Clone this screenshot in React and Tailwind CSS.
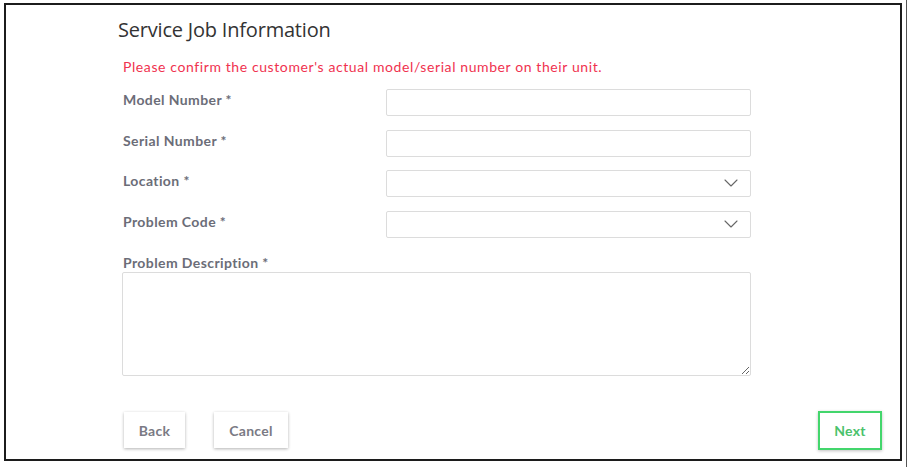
import { ChevronDown } from 'lucide-react';

const Field = ({ label, select = false }) => (
  <div className="flex items-center h-[27px]">
    <label className="w-[263px] mb-[6px] text-[14px] tracking-[0.4px] font-bold text-[#6b6d78]">{label}</label>
    <div className="relative w-[365px] h-[27px] border border-[#dcdcdc] rounded-[2px] bg-white">
      {select && (
        <ChevronDown size={24} strokeWidth={1.1} className="absolute right-[7px] top-0 text-[#666]" />
      )}
    </div>
  </div>
);

const Button = ({ children, className = '' }) => (
  <button className={`h-[36px] bg-white text-[14px] tracking-[0.3px] font-bold text-[#7a7a84] shadow-[0_1px_3px_rgba(0,0,0,0.3)] ${className}`}>
    {children}
  </button>
);

export default function App() {
  return (
    <div className="flex w-[909px] h-[467px] bg-white font-['Lato',sans-serif]">
      <div className="ml-[4px] mt-[3px] w-[898px] h-[458px] border-2 border-[#1c1c1c] flex flex-col pl-[112px] pr-[18px]">
        <h1 className="mt-[12px] text-[20px] leading-[26px] text-[#333] font-['Open_Sans',sans-serif] tracking-[-0.2px]">
          Service Job Information
        </h1>
        <p className="mt-[16px] ml-[5px] text-[14px] leading-[16px] text-[#f0324f] tracking-[0.6px]">
          Please confirm the customer's actual model/serial number on their unit.
        </p>
        <div className="mt-[14px] ml-[5px] flex flex-col gap-[13.5px]">
          <Field label="Model Number *" />
          <Field label="Serial Number *" />
          <Field label="Location *" select />
          <Field label="Problem Code *" select />
        </div>
        <label className="mt-[17px] ml-[5px] text-[14px] tracking-[0.4px] leading-[16px] font-bold text-[#6b6d78]">
          Problem Description *
        </label>
        <textarea className="mt-[1px] ml-[4px] w-[629px] h-[104px] border border-[#dcdcdc] rounded-[2px] resize-y outline-none" />
        <div className="mt-[35px] flex items-center">
          <Button className="ml-[6px] w-[61px]">Back</Button>
          <Button className="ml-[29px] w-[74px]">Cancel</Button>
          <button className="ml-auto w-[64px] h-[39px] border-2 border-[#43d66c] bg-white text-[14px] tracking-[0.3px] font-bold text-[#4bc26c] shadow-[0_1px_3px_rgba(0,0,0,0.25)]">
            Next
          </button>
        </div>
      </div>
      <div className="ml-[4px] w-px h-full bg-[#555]" />
    </div>
  );
}
